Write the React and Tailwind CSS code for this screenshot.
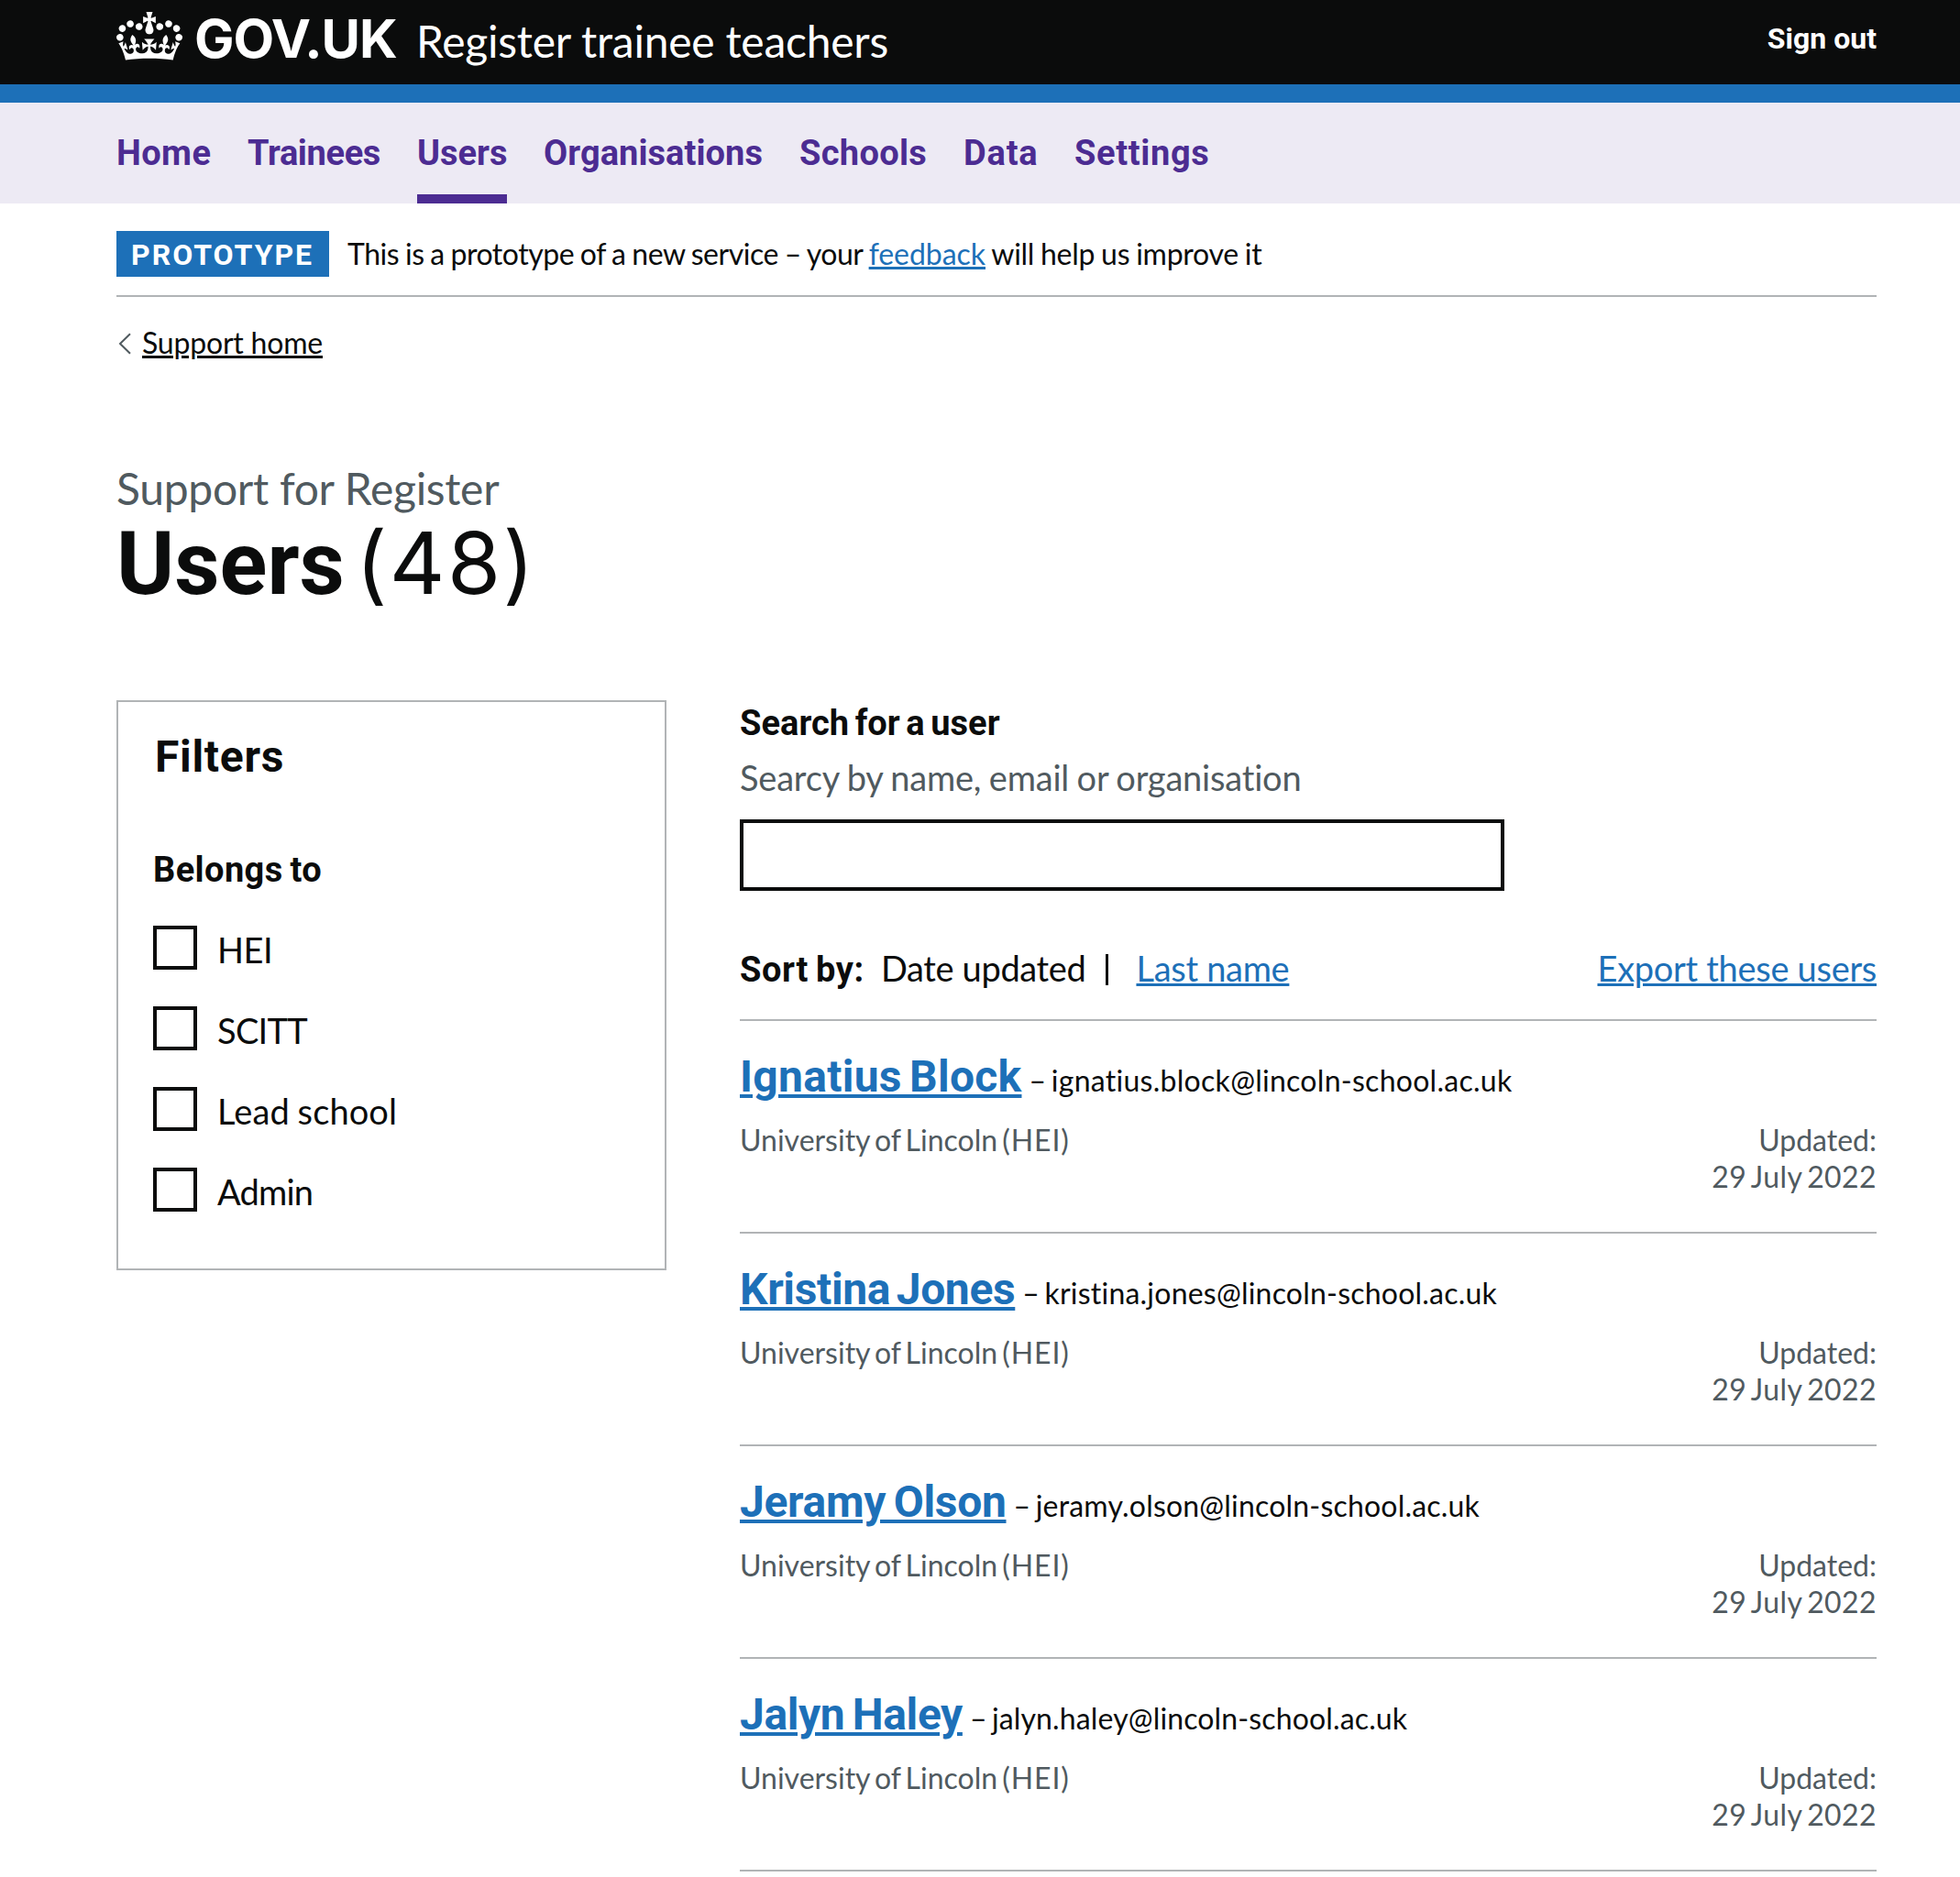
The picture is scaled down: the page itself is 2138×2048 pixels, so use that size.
import React from "react";

const NAV = [
  { label: "Home", style: "w-[103px] tracking-[0.4px]" },
  { label: "Trainees", style: "w-[145px] tracking-[-0.35px]" },
  { label: "Users", style: "w-[98px]", current: true },
  { label: "Organisations", style: "w-[239px] tracking-[0.06px]" },
  { label: "Schools", style: "w-[139px] tracking-[0.3px]" },
  { label: "Data", style: "w-[81px] tracking-[0.8px]" },
  { label: "Settings", style: "w-[147px] tracking-[0.65px]" },
];

const FILTERS = [
  { label: "HEI", style: "tracking-[-0.5px]" },
  { label: "SCITT", style: "tracking-[-0.7px]" },
  { label: "Lead school", style: "tracking-[0.1px] [word-spacing:-1px]" },
  { label: "Admin", style: "tracking-[-0.8px]" },
];

const USERS = [
  { name: "Ignatius Block", style: "tracking-[0.28px] [word-spacing:-4px]", email: "ignatius.block@lincoln-school.ac.uk", emailStyle: "tracking-[0.28px]" },
  { name: "Kristina Jones", style: "tracking-[-0.36px] [word-spacing:-5px]", email: "kristina.jones@lincoln-school.ac.uk", emailStyle: "tracking-[0.22px]" },
  { name: "Jeramy Olson", style: "tracking-[-0.32px] [word-spacing:-3px]", email: "jeramy.olson@lincoln-school.ac.uk", emailStyle: "tracking-[0.2px]" },
  { name: "Jalyn Haley", style: "tracking-[-0.4px] [word-spacing:-3px]", email: "jalyn.haley@lincoln-school.ac.uk", emailStyle: "tracking-[0.14px]" },
];

const bold = "font-['Roboto',sans-serif] font-bold";
const link = "text-[#1d70b8] underline decoration-[3px] underline-offset-[2px]";

function Crown() {
  return (
    <svg className="mt-[13px] h-[53px] w-[72px] shrink-0" viewBox="0 0 132 97" fill="currentColor" aria-hidden="true">
      <path d="M25 30.2c3.5 1.5 7.7-.2 9.1-3.7 1.5-3.6-.2-7.8-3.9-9.2-3.6-1.4-7.6.3-9.1 3.9-1.4 3.5.3 7.5 3.9 9zM9 39.5c3.6 1.5 7.8-.2 9.2-3.7 1.5-3.6-.2-7.8-3.9-9.1-3.6-1.5-7.6.2-9.1 3.8-1.4 3.5.3 7.5 3.8 9zM4.4 57.2c3.5 1.5 7.7-.2 9.1-3.8 1.5-3.6-.2-7.7-3.9-9.1-3.5-1.5-7.6.3-9.1 3.8-1.4 3.5.3 7.6 3.9 9.1zm38.3-21.4c3.5 1.5 7.7-.2 9.1-3.8 1.5-3.6-.2-7.7-3.9-9.1-3.6-1.5-7.6.3-9.1 3.8-1.3 3.6.4 7.7 3.9 9.1zm64.4-5.6c-3.6 1.5-7.8-.2-9.1-3.7-1.5-3.6.2-7.8 3.8-9.2 3.6-1.4 7.7.3 9.2 3.9 1.3 3.5-.4 7.5-3.9 9zm15.9 9.3c-3.6 1.5-7.7-.2-9.1-3.7-1.5-3.6.2-7.8 3.7-9.1 3.6-1.5 7.7.2 9.2 3.8 1.5 3.5-.3 7.5-3.8 9zm4.7 17.7c-3.6 1.5-7.8-.2-9.2-3.8-1.5-3.6.2-7.7 3.9-9.1 3.6-1.5 7.7.3 9.2 3.8 1.3 3.5-.4 7.6-3.9 9.1zM89.3 35.8c-3.6 1.5-7.8-.2-9.2-3.8-1.4-3.6.2-7.7 3.9-9.1 3.6-1.5 7.7.3 9.2 3.8 1.4 3.6-.3 7.7-3.9 9.1zM69.7 17.7l8.9 4.7V9.3l-8.9 2.8c-.2-.3-.5-.6-.9-.9L72.4 0H59.6l3.5 11.2c-.3.3-.6.5-.9.9l-8.8-2.8v13.1l8.8-4.7c.3.3.6.7.9.9l-5 15.4v.1c-.2.8-.4 1.6-.4 2.4 0 4.1 3.1 7.5 7 8.1h.2c.3 0 .7.1 1 .1.4 0 .7 0 1-.1h.2c4-.6 7.1-4.1 7.1-8.1 0-.8-.1-1.7-.4-2.4V34l-5.1-15.4c.4-.2.7-.6 1-.9zM66 92.8c16.9 0 32.8 1.1 47.1 3.2 4-16.9 8.9-26.7 14-33.5l-9.6-3.4c1 4.9 1.1 7.2 0 10.2-1.5-1.4-3-4.3-4.2-8.7L108.6 76c2.8-2 5-3.2 7.5-3.3-4.4 9.4-10 11.9-13.6 11.2-4.3-.8-6.3-4.6-5.6-7.9 1-4.7 5.7-5.9 8-.5 4.3-8.7-3-11.4-7.6-8.8 7.1-7.2 7.9-13.5 2.1-21.1-8 6.1-8.1 12.3-4.5 20.8-4.7-5.4-12.1-2.5-9.5 6.2 3.4-5.2 7.9-2 7.2 3.1-.6 4.3-6.4 7.8-13.5 7.2-10.3-.9-10.9-8-11.2-13.8 2.5-.5 7.1 1.8 11 7.3L80.2 60c-4.1 4.4-8 5.3-12.3 5.4 1.4-4.4 8-11.6 8-11.6H55.5s6.4 7.2 7.9 11.6c-4.2-.1-8-1-12.3-5.4l1.4 16.4c3.9-5.5 8.5-7.7 10.9-7.3-.3 5.8-.9 12.8-11.1 13.8-7.2.6-12.9-2.9-13.5-7.2-.7-5 3.8-8.3 7.1-3.1 2.7-8.7-4.6-11.6-9.4-6.2 3.7-8.5 3.6-14.7-4.6-20.8-5.8 7.6-5 13.9 2.2 21.1-4.7-2.6-11.9.1-7.7 8.8 2.3-5.5 7.1-4.2 8.1.5.7 3.3-1.3 7.1-5.7 7.9-3.5.7-9-1.8-13.5-11.2 2.5.1 4.7 1.3 7.5 3.3l-4.7-15.4c-1.2 4.4-2.7 7.2-4.3 8.7-1.1-3-.9-5.3 0-10.2l-9.5 3.4c5 6.9 9.9 16.7 14 33.5 14.8-2.1 30.8-3.2 47.7-3.2z" />
    </svg>
  );
}

function Header() {
  return (
    <header className="h-[112px] border-b-[20px] border-[#1d70b8] bg-[#0b0c0c] pr-[91px] pl-[127px] text-white">
      <div className="flex items-start justify-between">
        <div className="flex items-start">
          <Crown />
          <div className="mt-[11px] ml-[13px] flex items-start">
            <span className="w-[242px] font-['Inter',sans-serif] text-[58px] leading-[62px] font-bold tracking-[-1.1px]">GOV.UK</span>
            <span className="mt-[3px] text-[48px] leading-[62px] tracking-[-0.25px]">Register trainee teachers</span>
          </div>
        </div>
        <a className={`${bold} mt-[22px] text-[32px] leading-[40px]`}>Sign out</a>
      </div>
    </header>
  );
}

function Navigation() {
  return (
    <nav className="flex h-[110px] gap-10 bg-[#edeaf4] px-[127px]">
      {NAV.map(({ label, style, current }) => (
        <a
          key={label}
          className={`${bold} ${style} border-b-[10px] pt-[30px] text-[38px] leading-[51px] text-[#4c2c92] ${current ? "border-[#4c2c92]" : "border-transparent"}`}
        >
          {label}
        </a>
      ))}
    </nav>
  );
}

function Filters() {
  return (
    <aside className="h-[622px] w-[600px] shrink-0 border-2 border-[#b1b4b6] pl-[38px]">
      <h2 className={`${bold} mt-[30px] ml-[2px] text-[48px] leading-[60px] tracking-[0.7px]`}>Filters</h2>
      <h3 className={`${bold} mt-[68px] text-[38px] leading-[50px] tracking-[0.4px] [word-spacing:-2px]`}>Belongs to</h3>
      <ul className="mt-[36px] flex flex-col gap-10">
        {FILTERS.map(({ label, style }) => (
          <li key={label} className="flex h-[48px] items-start">
            <span className="size-[48px] border-4 border-[#0b0c0c]" />
            <span className={`${style} mt-[1px] ml-[22px] text-[38px] leading-[50px]`}>{label}</span>
          </li>
        ))}
      </ul>
    </aside>
  );
}

function User({ name, style, email, emailStyle }) {
  return (
    <li className="h-[232px] border-t-2 border-[#b1b4b6] pt-[31px]">
      <div className="flex items-baseline">
        <a className={`${bold} ${style} text-[48px] leading-[60px] text-[#1d70b8] underline decoration-[4px] underline-offset-[3px]`}>{name}</a>
        <span className={`${emailStyle} ml-[8px] text-[32px] leading-[40px] [word-spacing:-3px]`}>– {email}</span>
      </div>
      <div className="mt-[19px] flex justify-between text-[32px] leading-[40px] text-[#505a5f] [word-spacing:-3px]">
        <p>
          University of Lincoln <span className="tracking-[0.9px]">(HEI)</span>
        </p>
        <p className="text-right">
          Updated:
          <br />
          <span className="tracking-[0.4px]">29 July 2022</span>
        </p>
      </div>
    </li>
  );
}

export default function App() {
  return (
    <div className="h-[2048px] overflow-hidden bg-white font-['Lato',sans-serif] whitespace-nowrap text-[#0b0c0c] [font-variant-ligatures:none]">
      <Header />
      <Navigation />
      <div className="pr-[91px] pl-[127px]">
        <div className="flex h-[102px] border-b-2 border-[#b1b4b6] pt-[30px]">
          <strong className={`${bold} h-[50px] w-[232px] bg-[#1d70b8] pl-[16px] text-[32px] leading-[52px] tracking-[2px] text-white`}>PROTOTYPE</strong>
          <p className="mt-[1px] ml-5 text-[32px] leading-[48px] tracking-[-0.46px] [word-spacing:-1px]">
            This is a prototype of a new service – your <a className={`${link} tracking-[-0.05px]`}>feedback</a>
            <span className="tracking-[-0.27px]"> will help us improve it</span>
          </p>
        </div>

        <div className="mt-[30px] flex h-[40px] items-start">
          <svg className="mt-[9px] ml-[2px] h-[24px] w-[14px]" viewBox="0 0 14 24" fill="none" stroke="#505a5f" strokeWidth="2">
            <path d="M13 1.2 2 12l11 10.8" />
          </svg>
          <a className="ml-[12px] text-[32px] leading-[40px] tracking-[-0.2px] underline decoration-[3px] underline-offset-[2px]">Support home</a>
        </div>

        <h1 className="mt-[109px] h-[158px]">
          <span className="block h-[61px] text-[48px] leading-[60px] tracking-[-0.3px] text-[#505a5f]">Support for Register</span>
          <span className="flex items-baseline text-[96px] leading-[100px]">
            <span className={bold}>Users</span>
            <span className="ml-[12px] font-['Inter',sans-serif] text-[94px] tracking-[2.5px]">(48)</span>
          </span>
        </h1>

        <div className="mt-[103px] flex items-start gap-20">
          <Filters />
          <main className="grow">
            <label className={`${bold} block text-[38px] leading-[50px] tracking-[0.05px] [word-spacing:-3px]`}>Search for a user</label>
            <p className="mt-[9px] text-[38px] leading-[50px] tracking-[-0.2px] text-[#505a5f] [word-spacing:-1px]">Searcy by name, email or organisation</p>
            <div className="mt-[21px] h-[78px] w-[834px] border-4 border-[#0b0c0c]" />
            <div className="mt-[59px] flex h-[81px] items-baseline text-[38px] leading-[50px]">
              <strong className={`${bold} w-[154px] tracking-[0.6px] [word-spacing:-2px]`}>Sort by:</strong>
              <span className="tracking-[-0.35px]">Date updated</span>
              <span className="ml-[22px] h-[34px] w-[3px] translate-y-[4px] bg-[#0b0c0c]" />
              <a className={`${link} ml-[30px] tracking-[-0.3px]`}>Last name</a>
              <a className={`${link} ml-auto tracking-[-0.3px]`}>Export these users</a>
            </div>
            <ul>
              {USERS.map((user) => (
                <User key={user.name} {...user} />
              ))}
              <li className="border-t-2 border-[#b1b4b6]" />
            </ul>
          </main>
        </div>
      </div>
    </div>
  );
}
